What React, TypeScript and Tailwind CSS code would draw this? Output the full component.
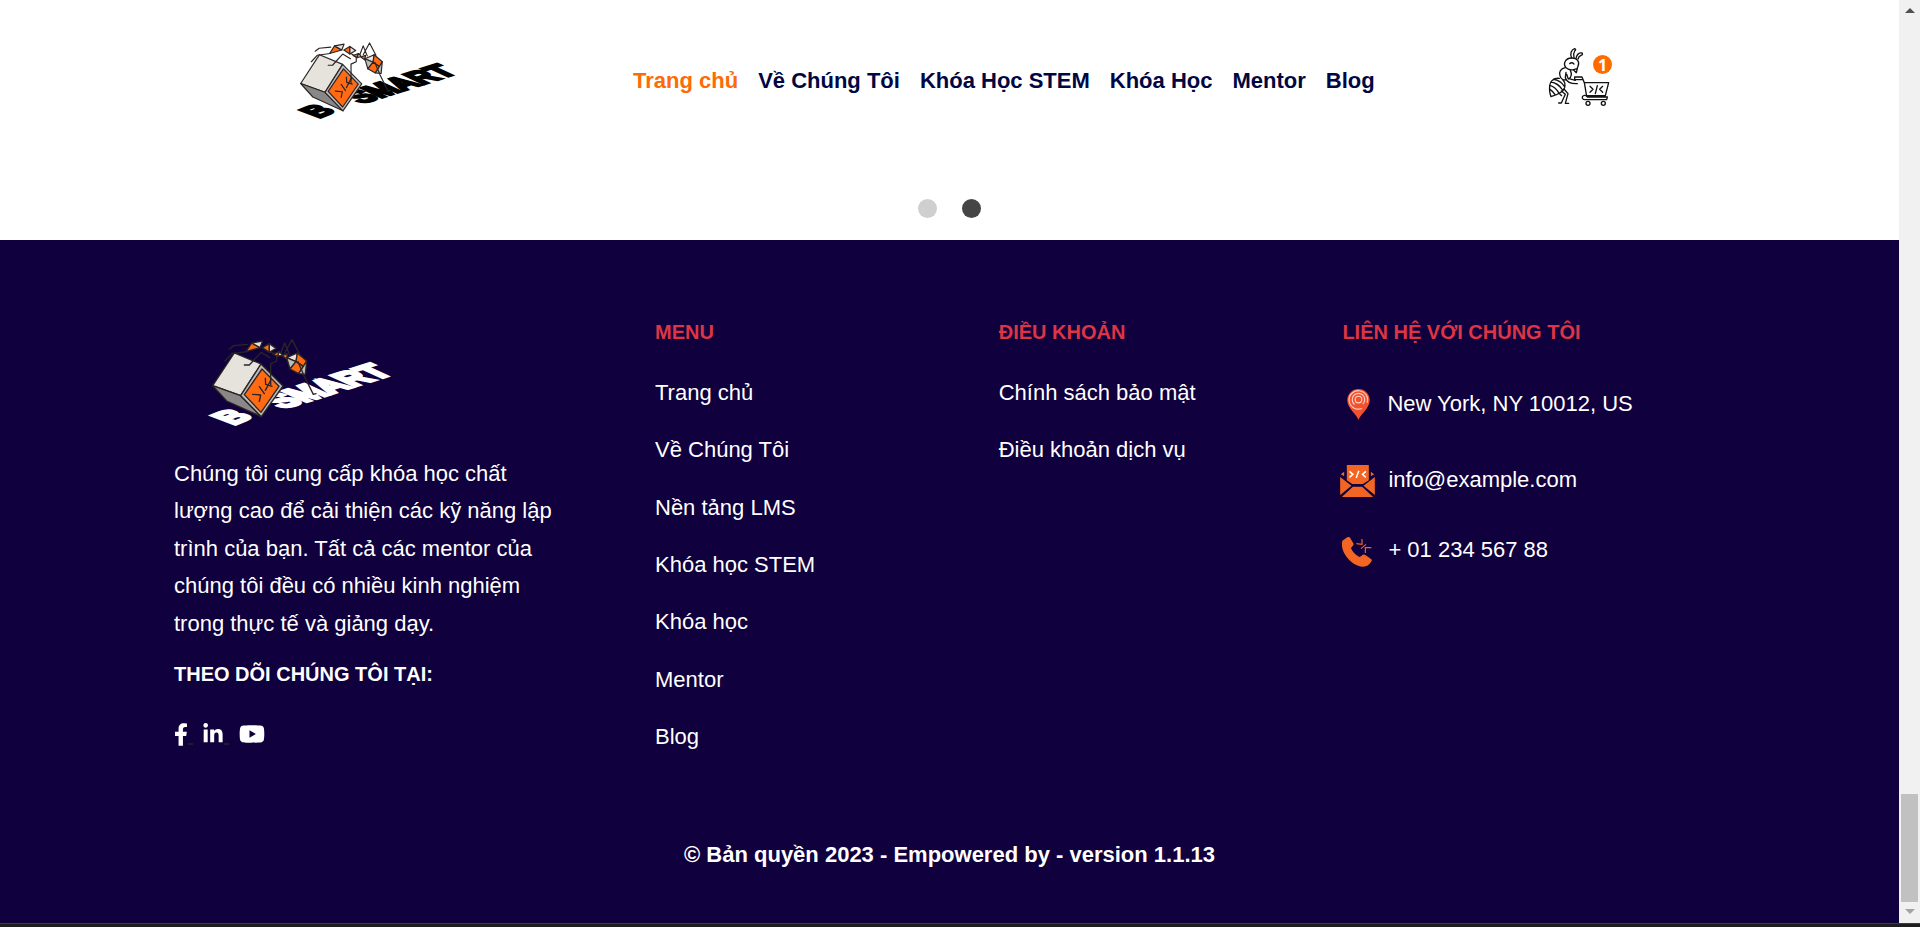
import { FaFacebookF, FaLinkedinIn, FaYoutube } from "react-icons/fa";

const NAV = ["Trang chủ", "Về Chúng Tôi", "Khóa Học STEM", "Khóa Học", "Mentor", "Blog"];
const MENU = ["Trang chủ", "Về Chúng Tôi", "Nền tảng LMS", "Khóa học STEM", "Khóa học", "Mentor", "Blog"];
const TERMS = ["Chính sách bảo mật", "Điều khoản dịch vụ"];

function Logo({ className, ink }: { className: string; ink: string }) {
  return (
    <svg viewBox="0 0 660 330" preserveAspectRatio="none" className={className}>
      <g fill={ink} fontFamily="Liberation Sans" fontWeight="700" stroke={ink} strokeWidth="10">
        <text transform="matrix(1.09 -0.345 1.2 0.55 280 252)" fontSize="86">SMART</text>
        <text transform="matrix(1 -0.4 1.2 0.45 130 301)" fontSize="86">B</text>
      </g>
      <g stroke="#2b2523" strokeWidth="4" strokeLinejoin="round" strokeLinecap="round">
        <path d="M133 84L213 117L152 212L68 182Z" fill="#e6e2dc" />
        <path d="M68 182L152 212L214 275L110 228Z" fill="#8a8788" />
        <path d="M213 117L279 183L214 275L152 212Z" fill="#bdbbbb" />
        <path d="M216 132L267 184L213 262L163 209Z" fill="#ff6a13" />
        <path d="M188 208L212 210L208 229M208 185L223 206M226 160L227 178L246 184M244 162L226 196" fill="none" />
        <path d="M105 108L125 86L170 80M118 72L132 62L172 58M163 120L178 120L213 82L240 98M242 80L260 92V108L242 116V180M270 90L284 54L298 88M284 84L306 44L328 86" fill="none" />
        <path d="M168 80L185 54L210 68Z" fill="#ff6a13" />
        <path d="M185 54L218 48L210 68Z" fill="#e6e2dc" />
        <path d="M217 68L238 56V82Z" fill="#ff6a13" />
        <path d="M238 56L258 70L238 82Z" fill="#e6e2dc" />
        <path d="M249 87L268 80L263 94ZM276 92L292 86L290 102Z" fill="#ff6a13" />
        <path d="M268 80L277 90L263 94Z" fill="#e6e2dc" />
        <path d="M290 98L322 84L318 110Z" fill="#e6e2dc" />
        <path d="M322 84L350 108L340 124L318 110Z" fill="#ff6a13" />
        <path d="M290 98L318 110L300 132Z" fill="#bdbbbb" />
        <path d="M318 110L340 124L326 146L300 132Z" fill="#ff6a13" />
        <path d="M350 108L346 148L326 146L340 124Z" fill="#bdbbbb" />
        <path d="M324 110L342 152L370 208L378 206" fill="none" />
      </g>
    </svg>
  );
}

function CartIcon() {
  return (
    <svg viewBox="0 0 300 240" className="h-20 w-[100px]" fill="none" stroke="#111" strokeWidth="4" strokeLinecap="round" strokeLinejoin="round">
      <path d="M125 69C119 56 124 44 134 41Q140 43 134 48Q129 56 132 68M138 70C140 60 146 52 156 54Q160 59 153 61Q146 64 144 72" />
      <path d="M108 98C98 86 106 70 124 69C142 68 150 80 144 94L141 102M108 98Q118 106 130 104M119 86Q125 80 132 87M130 104L139 113L142 101Z" />
      <path d="M106 98C92 100 86 112 90 122C92 132 100 137 110 134M121 106C126 116 124 126 116 132M108 112L106 128C110 140 118 147 142 146M110 118L114 130L136 136" />
      <path d="M88 130C70 128 60 140 59 152C58 164 59 176 63 185C80 180 100 172 104 158C106 148 104 140 99 136M70 133Q92 136 103 154M63 141Q84 144 98 165M60 151Q76 156 86 173M60 163Q68 168 75 179" />
      <path d="M94 168L106 178L94 204H86M86 174L95 182M102 162L114 176L106 205H116" />
      <path d="M134 126H156L163 143L170 184M134 126V134H157M163 143H236L226 182H168M168 182C154 178 154 194 164 194H230L232 186H172" />
      <path d="M180 154L189 163L180 172M202 152L196 176M218 154L209 163L218 172" />
      <circle cx="174" cy="205" r="6" />
      <circle cx="220" cy="205" r="6" />
    </svg>
  );
}

function PinIcon() {
  return (
    <svg viewBox="0 0 68 94" className="h-[31px] w-[23px]">
      <path d="M34 94C28 76 0 58 0 34a34 34 0 0 1 68 0C68 58 40 76 34 94Z" fill="#f1512d" />
      <g fill="none" stroke="#fbd0c4" strokeWidth="3.5">
        <path d="M44 59A28 28 0 1 1 60 42" />
        <path d="M22 47A19 19 0 1 1 47 46" />
        <circle cx="34" cy="32" r="10" />
      </g>
    </svg>
  );
}

function MailIcon() {
  return (
    <svg viewBox="0 0 104 96" className="h-8 w-[35px]" fill="#f26522">
      <path d="M20 0H86V46L68 57H36L20 46ZM0 36L34 62L0 90ZM104 36L70 62L104 90ZM38 65H66L99 96H5ZM12 20V34L2 28ZM92 20V34L102 28Z" />
      <path d="M28 19L38 28L28 37M56 17L48 39M77 19L67 28L77 37" fill="none" stroke="#fff" strokeWidth="4.5" />
    </svg>
  );
}

function PhoneIcon() {
  return (
    <svg viewBox="0 0 90 90" className="size-[30px]" fill="#f26522">
      <path d="M3 10L16 1C21-1 24 1 26 5L34 19C36 23 34 26 30 29L27 33C30 43 41 55 53 60L59 56C63 52 67 52 71 55L86 65C90 67 91 71 87 75C81 84 73 90 62 89C27 86-4 46 0 17C0 13 1 12 3 10Z" />
      <path d="M60 6V22L43 20M88 32H70V48M57 35L72 22" fill="none" stroke="#f26522" strokeWidth="3.5" />
    </svg>
  );
}

function LinkColumn({ title, links }: { title: string; links: string[] }) {
  return (
    <div className="w-[343.7px]">
      <h6 className="text-xl leading-6 font-bold text-[#dc3545]">{title}</h6>
      <ul className="mt-[30px] flex flex-col gap-5 text-[22px] leading-[37.35px]">
        {links.map((l) => (
          <li key={l}>{l}</li>
        ))}
      </ul>
    </div>
  );
}

export default function App() {
  return (
    <div className="flex h-[927px] flex-col overflow-hidden bg-[#1e1e1e] font-['Liberation_Sans',Arial,sans-serif]">
      <div className="flex h-[923px]">
        <div className="flex w-[1899px] flex-col bg-white">
          <header className="flex h-40 items-start">
            <Logo className="mt-[30px] ml-[281px] h-[97px] w-[191px] shrink-0" ink="#000" />
            <nav className="mt-[68px] ml-[161px] flex w-[897px] shrink-0 gap-5 text-[22px] leading-[26px] font-bold whitespace-nowrap text-[#000742]">
              {NAV.map((n, i) => (
                <a key={n} className={i === 0 ? "text-[#fd6b05]" : ""}>{n}</a>
              ))}
            </nav>
            <div className="relative mt-[35px]">
              <CartIcon />
              <span className="absolute top-5 left-[63px] flex size-[19px] items-center justify-center rounded-full bg-[#ff6b00] font-['Open_Sans',sans-serif] text-base leading-none font-bold text-white">1</span>
            </div>
          </header>
          <div className="flex h-20 items-start justify-center gap-[25px] pt-[39px]">
            <span className="size-[19px] rounded-full bg-[#cfcfcf]" />
            <span className="size-[19px] rounded-full bg-[#454545]" />
          </div>
          <footer className="flex flex-1 flex-col bg-[#10003d] text-white">
            <div className="flex h-[586px] pt-20 pl-[174px]">
              <div className="w-[481px]">
                <Logo className="mt-[5px] ml-4 h-[110px] w-[220px]" ink="#fff" />
                <p className="mt-5 w-[385px] text-[22px] leading-[37.4px]">
                  Chúng tôi cung cấp khóa học chất lượng cao để cải thiện các kỹ năng lập trình của bạn. Tất cả các mentor của chúng tôi đều có nhiều kinh nghiệm trong thực tế và giảng dạy.
                </p>
                <h6 className="mt-5 text-xl leading-6 font-bold">THEO DÕI CHÚNG TÔI TẠI:</h6>
                <div className="mt-[35px] flex items-center">
                  <FaFacebookF className="h-[23px] w-[14px]" />
                  <span className="mt-5 h-0.5 w-[5px] bg-[#1e1c2c]" />
                  <FaLinkedinIn className="ml-[9px] size-[22px]" />
                  <span className="mt-5 h-0.5 w-[5px] bg-[#1e1c2c]" />
                  <FaYoutube className="ml-[10px] size-[26px]" />
                </div>
              </div>
              <LinkColumn title="MENU" links={MENU} />
              <LinkColumn title="ĐIỀU KHOẢN" links={TERMS} />
              <div>
                <h6 className="text-xl leading-6 font-bold text-[#dc3545]">LIÊN HỆ VỚI CHÚNG TÔI</h6>
                <div className="mt-9 flex h-[46px] items-center pl-[5px] text-[22px]">
                  <div className="pt-0.5"><PinIcon /></div>
                  <span className="ml-[17px]">New York, NY 10012, US</span>
                </div>
                <div className="mt-[30px] -ml-0.5 flex h-[46px] items-center text-[22px]">
                  <div className="pt-[3px]"><MailIcon /></div>
                  <span className="ml-[13px]">info@example.com</span>
                </div>
                <div className="mt-6 flex h-[46px] items-center text-[22px]">
                  <div className="pt-[5px]"><PhoneIcon /></div>
                  <span className="ml-4">+ 01 234 567 88</span>
                </div>
              </div>
            </div>
            <p className="mt-4 text-center text-[22px] leading-[26px] font-bold">© Bản quyền 2023 - Empowered by - version 1.1.13</p>
          </footer>
        </div>
        <div className="flex w-[21px] flex-col items-center bg-[#f1f1f1]">
          <svg viewBox="0 0 10 5" className="mt-2 h-[5px] w-[10px]"><path d="M0 5L5 0L10 5Z" fill="#505050" /></svg>
          <div className="mt-[781px] h-[108px] w-[17px] bg-[#c1c1c1]" />
          <svg viewBox="0 0 10 5" className="mt-[7px] h-[5px] w-[10px]"><path d="M0 0L5 5L10 0Z" fill="#a3a3a3" /></svg>
        </div>
      </div>
      <div className="h-1 border-t border-[#3c3c3c] bg-[#1e1e1e]" />
    </div>
  );
}
